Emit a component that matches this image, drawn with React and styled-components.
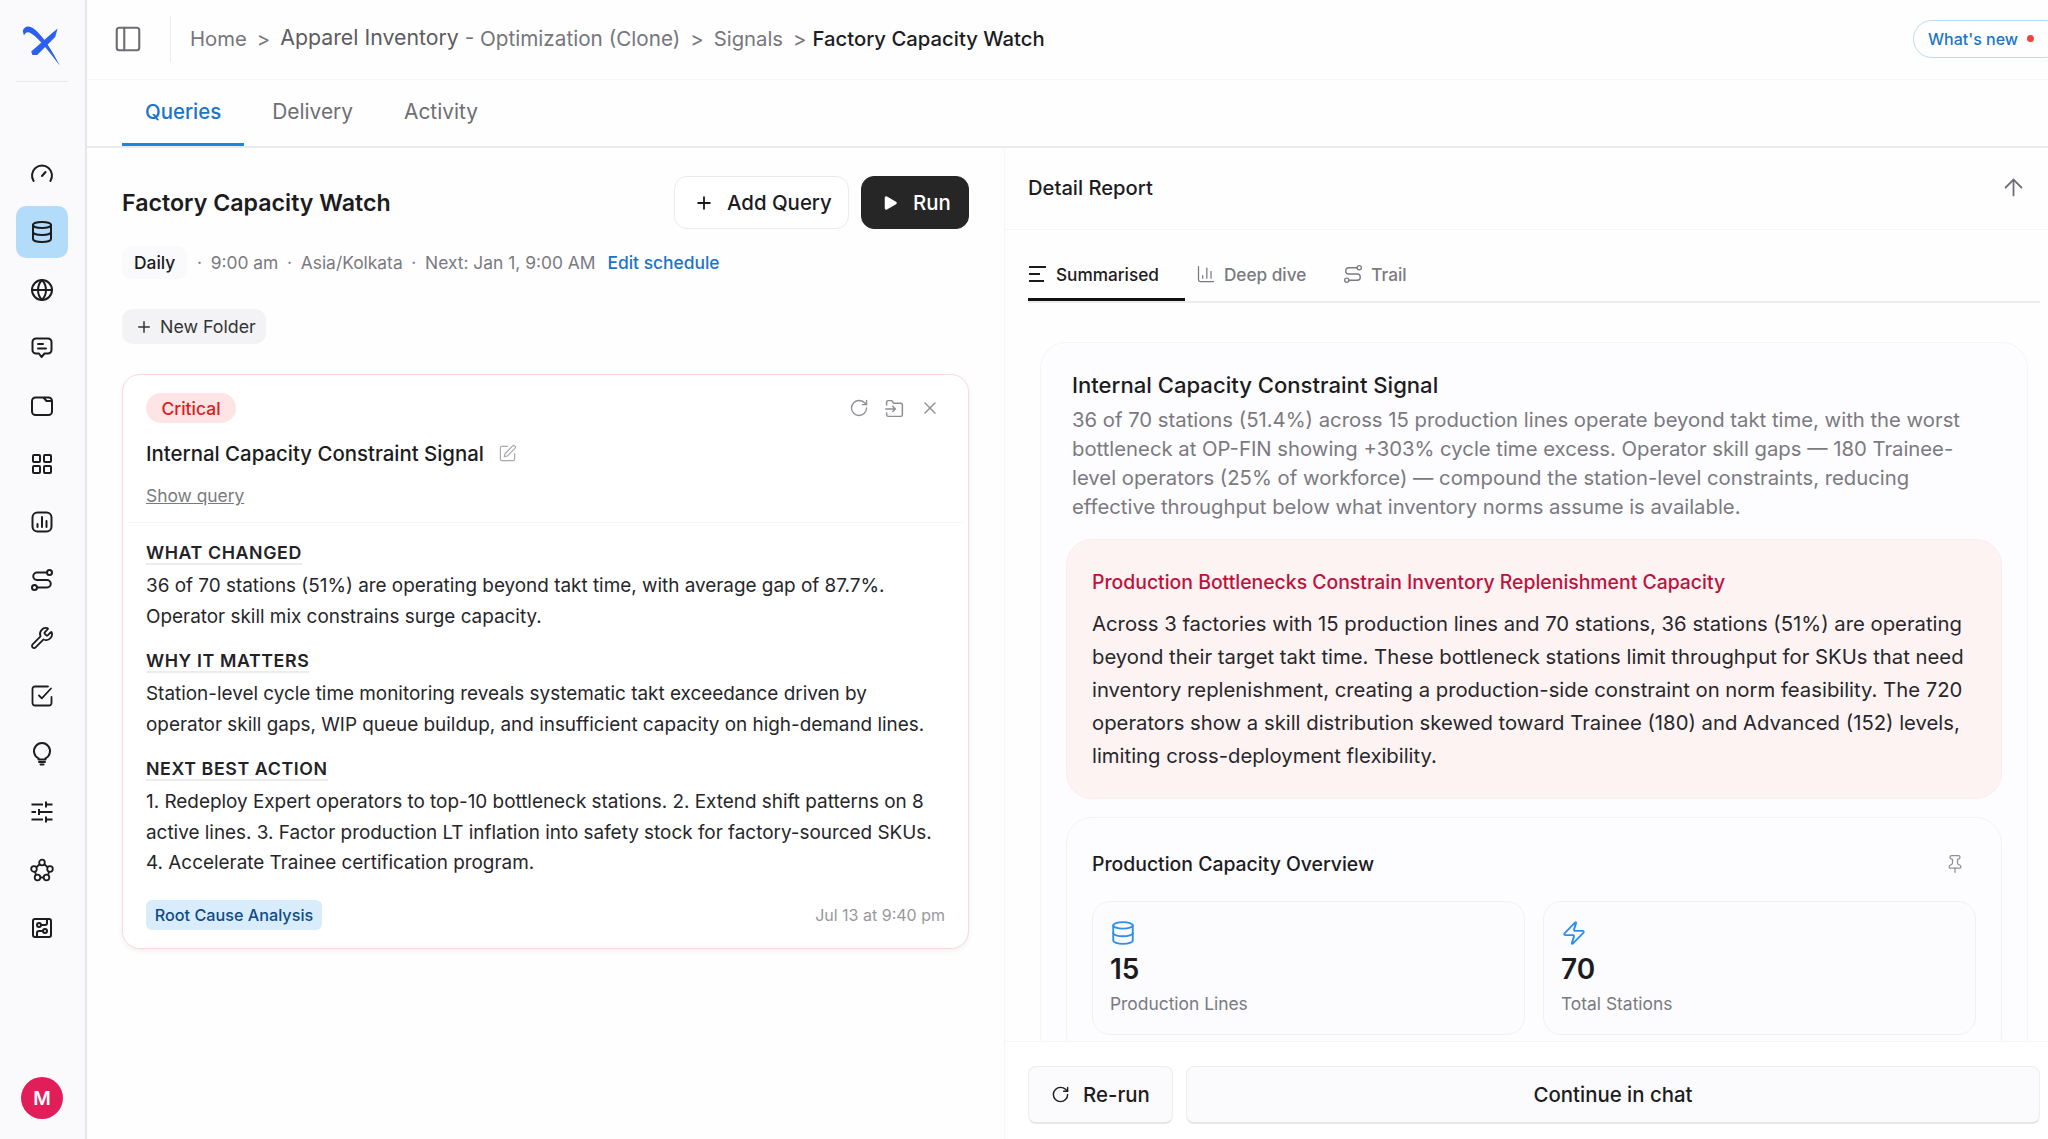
import React from 'react';
import styled, { createGlobalStyle } from 'styled-components';
import {
  ArrowUp, ChartColumn, CircuitBoard, Database, Globe, LayoutGrid,
  PanelLeft, Pin, Play, Plus, RotateCw, SquarePen, Wrench, X, Zap,
} from 'lucide-react';

const GlobalStyle = createGlobalStyle`
  html, body { margin: 0; height: 100%; background: #fefefe; overflow: hidden; }
  body { font-family: Inter, "Liberation Sans", sans-serif; color: #1c1c1e; }
  * { box-sizing: border-box; }
`;

const Shell = styled.div`
  display: flex;
  width: 2048px;
  height: 1139px;
  overflow: hidden;
`;

const Sidebar = styled.aside`
  flex: 0 0 87px;
  display: flex;
  flex-direction: column;
  align-items: center;
  background: #faf9fc;
  border-right: 2px solid #e6e6e8;
  padding: 0 1px 20px 0;
`;

const LogoWrap = styled.div`
  width: 52px;
  height: 82px;
  flex: none;
  display: flex;
  align-items: center;
  justify-content: center;
  padding-top: 4px;
  border-bottom: 1px solid #e9e9ec;
  margin-bottom: 66px;
  svg { flex: none; }
`;

const NavList = styled.nav`
  display: flex;
  flex-direction: column;
  gap: 6px;
`;

const NavItem = styled.div`
  width: 52px;
  height: 52px;
  display: flex;
  align-items: center;
  justify-content: center;
  border-radius: 10px;
  color: #1c1c1e;
  background: ${props => (props.$active ? '#b3dbfa' : 'transparent')};
`;

const Avatar = styled.div`
  margin-top: auto;
  width: 42px;
  height: 42px;
  border-radius: 50%;
  background: #e11d5a;
  color: #fff;
  font-size: 19px;
  font-weight: 600;
  display: flex;
  align-items: center;
  justify-content: center;
`;

const Content = styled.div`
  flex: 1;
  min-width: 0;
  display: flex;
  flex-direction: column;
`;

const TopBar = styled.header`
  flex: 0 0 80px;
  display: flex;
  align-items: center;
  border-bottom: 1px solid #f6f6f7;
  padding: 0 0 2px 26px;
`;

const TopDivider = styled.div`
  width: 1px;
  height: 46px;
  background: #eeeeef;
  margin: 0 19px 0 27px;
`;

const Crumbs = styled.div`
  display: flex;
  align-items: center;
  font-size: 20.3px;
  color: #76767c;
`;

const Crumb = styled.span`
  color: ${props => (props.$current ? '#1c1c1e' : props.$strong ? '#5c5c62' : '#76767c')};
  font-weight: ${props => (props.$current ? 500 : 400)};
  font-size: ${props => props.$size || 'inherit'};
  margin-bottom: ${props => (props.$strong ? '4px' : '0')};
`;

const CrumbSep = styled.span`
  margin: 0 ${props => (props.$tight ? '6px' : '10px')} 0 10px;
`;

const NewsPill = styled.div`
  margin-left: auto;
  margin-right: -16px;
  height: 38px;
  width: 151px;
  flex: none;
  display: flex;
  align-items: center;
  gap: 9px;
  padding-left: 14px;
  border: 1px solid #bcdcf6;
  border-radius: 19px;
  color: #1a75c9;
  font-size: 16px;
  font-weight: 500;
`;

const RedDot = styled.span`
  width: 7px;
  height: 7px;
  border-radius: 50%;
  background: #f43f3f;
`;

const TabBar = styled.div`
  flex: 0 0 66px;
  display: flex;
  gap: 5px;
  padding-left: 35px;
  border-bottom: 2px solid #ebebed;
`;

const Tab = styled.div`
  height: 66px;
  padding: 0 23px;
  display: flex;
  align-items: center;
  font-size: ${props => (props.$active ? '20.4px' : '20.9px')};
  font-weight: ${props => (props.$active ? 500 : 400)};
  color: ${props => (props.$active ? '#1a75c9' : '#6e6e74')};
  border-bottom: 3px solid ${props => (props.$active ? '#1a86e0' : 'transparent')};
`;

const Main = styled.div`
  flex: 1;
  min-height: 0;
  display: flex;
`;

const LeftPane = styled.section`
  flex: 0 0 917px;
  padding: 28px 35px 0;
`;

const TitleRow = styled.div`
  display: flex;
  align-items: center;
`;

const PageTitle = styled.h1`
  margin: 0;
  font-size: 23.2px;
  font-weight: 600;
  flex: 1;
`;

const Button = styled.button`
  height: 53px;
  display: flex;
  align-items: center;
  font-family: inherit;
  font-size: 20.4px;
  font-weight: 500;
  border-radius: 13px;
  border: 1px solid ${props => (props.$dark ? '#262626' : '#ebebed')};
  background: ${props => (props.$dark ? '#262626' : '#fff')};
  color: ${props => (props.$dark ? '#fff' : '#1c1c1e')};
  margin-left: ${props => (props.$dark ? '12px' : '0')};
  width: ${props => props.$width};
  padding: 0 0 0 19px;
  gap: ${props => (props.$dark ? '14px' : '13px')};
`;

const MetaRow = styled.div`
  display: flex;
  align-items: center;
  margin-top: 17px;
  font-size: 17.4px;
  color: #7a7a80;
`;

const Chip = styled.span`
  height: 33px;
  padding: 0 12px;
  border-radius: 9px;
  background: #faf9fb;
  color: #1c1c1e;
  font-weight: 500;
  display: flex;
  align-items: center;
  margin-right: 1px;
`;

const Dot = styled.span`
  margin: 0 8.7px;
`;

const EditLink = styled.a`
  margin-left: 12px;
  color: #1a75c9;
  font-weight: 500;
`;

const FolderButton = styled.button`
  margin-top: 30px;
  height: 35px;
  width: 144px;
  border: none;
  border-radius: 11px;
  background: #f3f3f5;
  color: #333338;
  font-family: inherit;
  font-size: 17.8px;
  display: flex;
  align-items: center;
  gap: 7px;
  padding: 0 0 0 13px;
`;

const SignalCard = styled.article`
  margin-top: 30px;
  height: 575px;
  padding: 18px 23px 0;
  border: 1px solid #fbd9dc;
  border-radius: 18px;
  background: #fff;
  box-shadow: 0 2px 5px rgba(0, 0, 0, 0.06);
`;

const CardTop = styled.div`
  display: flex;
  align-items: center;
  justify-content: space-between;
`;

const CriticalBadge = styled.span`
  height: 30px;
  width: 90px;
  display: flex;
  align-items: center;
  justify-content: center;
  border-radius: 15px;
  background: #fee4e4;
  color: #dc1c1c;
  font-size: 17.5px;
  font-weight: 500;
`;

const CardActions = styled.div`
  display: flex;
  align-items: center;
  gap: 15px;
  color: #8e8e94;
  padding-right: 5px;
`;

const SignalTitle = styled.div`
  display: flex;
  align-items: center;
  gap: 14px;
  margin-top: 15px;
  height: 30px;
  font-size: 20.4px;
  font-weight: 500;
  color: #1c1c1e;
`;

const ShowQuery = styled.a`
  display: block;
  margin-top: 16px;
  font-size: 17.4px;
  line-height: 24px;
  color: #7a7a80;
  text-decoration: underline;
`;

const CardRule = styled.div`
  height: 1px;
  background: #f5f5f6;
  margin: 14px -18px 0;
`;

const SectionList = styled.div`
  display: flex;
  flex-direction: column;
  gap: 17px;
  padding-top: 18px;
`;

const SectionHead = styled.div`
  width: fit-content;
  height: 24px;
  line-height: 24px;
  font-size: 17.8px;
  font-weight: 600;
  letter-spacing: 0.6px;
  border-bottom: 2px solid #ececee;
  color: #232327;
`;

const SectionBody = styled.p`
  margin: 6px 0 0;
  font-size: 18.9px;
  line-height: 30.5px;
  color: #26262a;
`;

const CardFooter = styled.div`
  display: flex;
  align-items: center;
  justify-content: space-between;
  margin-top: 21px;
`;

const RootTag = styled.span`
  height: 30px;
  width: 176px;
  display: flex;
  align-items: center;
  justify-content: center;
  border-radius: 6px;
  background: #d9ecfc;
  color: #0f4c86;
  font-size: 16.2px;
  font-weight: 500;
`;

const Stamp = styled.span`
  font-size: 16px;
  color: #98989e;
`;

const RightPane = styled.section`
  flex: 1;
  min-width: 0;
  display: flex;
  flex-direction: column;
  border-left: 1px solid #f6f6f7;
`;

const ReportHead = styled.div`
  flex: 0 0 82px;
  display: flex;
  align-items: center;
  justify-content: space-between;
  padding: 0 21px 2px 23px;
  border-bottom: 1px solid #f6f6f7;
  font-size: 20.2px;
  font-weight: 500;
  color: #6e6e74;
`;

const ReportTitle = styled.span`
  color: #1c1c1e;
`;

const ReportTabs = styled.div`
  flex: 0 0 71px;
  display: flex;
  margin: 0 8px 0 23px;
  border-bottom: 2px solid #ececee;
`;

const ReportTab = styled.div`
  display: flex;
  align-items: center;
  gap: 8px;
  height: 71px;
  padding: 20px 26px 0 0;
  margin-right: 11px;
  font-size: 17.2px;
  font-weight: 500;
  color: ${props => (props.$active ? '#1c1c1e' : '#7a7a80')};
  border-bottom: 3px solid ${props => (props.$active ? '#111' : 'transparent')};
`;

const ReportBody = styled.div`
  flex: 1;
  min-height: 0;
  overflow: hidden;
  padding: 39px 20px 0 35px;
`;

const ReportCard = styled.div`
  border: 1px solid #f5f4f7;
  border-radius: 26px;
  background: #fdfcfe;
  padding: 27px 25px 30px;
`;

const SummaryTitle = styled.h2`
  margin: 0 0 5px 6px;
  font-size: 22.1px;
  line-height: 30px;
  font-weight: 500;
  color: #1c1c1e;
`;

const SummaryText = styled.p`
  margin: 0 6px 18px;
  font-size: 20.3px;
  line-height: 29px;
  color: #7a7a80;
`;

const AlertBox = styled.div`
  padding: 29px 25px 26px;
  border: 1px solid #fdecec;
  border-radius: 26px;
  background: #fef3f3;
`;

const AlertTitle = styled.h3`
  margin: 0;
  font-size: 19.4px;
  line-height: 26px;
  font-weight: 500;
  color: #be123c;
`;

const AlertText = styled.p`
  margin: 12px 0 0;
  font-size: 20.3px;
  line-height: 33px;
  color: #27272b;
`;

const OverviewCard = styled.div`
  margin-top: 18px;
  padding: 33px 25px 24px;
  border: 1px solid #f3f2f5;
  border-radius: 26px;
`;

const OverviewHead = styled.div`
  display: flex;
  align-items: center;
  justify-content: space-between;
  height: 26px;
  font-size: 19.4px;
  font-weight: 500;
  color: #8e8e94;
  padding-right: 11px;
`;

const OverviewTitle = styled.span`
  color: #1c1c1e;
`;

const StatGrid = styled.div`
  display: grid;
  grid-template-columns: 1fr 1fr;
  gap: 18px;
  margin-top: 24px;
`;

const StatCard = styled.div`
  height: 134px;
  padding: 18px 17px;
  border: 1px solid #f1f0f3;
  border-radius: 18px;
  background: #fcfbfd;
  color: #2b8ff0;
`;

const StatValue = styled.div`
  margin-top: 1px;
  font-size: 28px;
  line-height: 36px;
  font-weight: 600;
  color: #1c1c1e;
`;

const StatLabel = styled.div`
  margin-top: 5px;
  font-size: 17.4px;
  line-height: 24px;
  color: #7a7a80;
`;

const ReportFooter = styled.div`
  flex: 0 0 98px;
  display: flex;
  gap: 13px;
  padding: 24px 8px 15px 23px;
  background: #fff;
  border-top: 1px solid #f6f6f7;
`;

const FooterButton = styled.button`
  flex: ${props => (props.$wide ? 1 : '0 0 145px')};
  display: flex;
  align-items: center;
  justify-content: center;
  gap: 13px;
  font-family: inherit;
  font-size: 20.4px;
  font-weight: 500;
  color: #1c1c1e;
  background: #fbfafc;
  border: 1px solid #eeeef0;
  border-bottom: 2px solid #e6e6e8;
  border-radius: 8px;
`;

const LogoMark = () => (
  <svg width="72" height="72" viewBox="0 0 60 60" fill="#2a5ff0">
    <path d="M14 20C15 16 19 15 23 18C31 24 38 36 45 49C37 39 29 27 21 22C18 20 16 21 15 24Z" />
    <path d="M21 37L38 22L43 18L41 25L26 40L22 40Z" />
  </svg>
);

const GaugeIcon = () => (
  <svg width="24" height="24" viewBox="0 0 24 24" fill="none" stroke="currentColor" strokeWidth="2" strokeLinecap="round">
    <path d="M3.600 19A10 10 0 1 1 20.400 19" />
    <path d="M12 14l3.500-4" />
  </svg>
);

const ChatIcon = () => (
  <svg width="24" height="24" viewBox="0 0 24 24" fill="none" stroke="currentColor" strokeWidth="2" strokeLinecap="round" strokeLinejoin="round">
    <path d="M6 2.500h12a3.500 3.500 0 0 1 3.500 3.500v8a3.500 3.500 0 0 1-3.500 3.500h-3.500l-3 3.500-2.500-3.500H6a3.500 3.500 0 0 1-3.500-3.500V6A3.500 3.500 0 0 1 6 2.500z" />
    <path d="M8 8h5M8 12.500h8" />
  </svg>
);

const FolderIcon = () => (
  <svg width="24" height="24" viewBox="0 0 24 24" fill="none" stroke="currentColor" strokeWidth="2" strokeLinejoin="round">
    <rect x="2" y="3.500" width="20" height="17.500" rx="3.500" />
    <path d="M13.500 3.500l3 3.500H22" />
  </svg>
);

const ReportIcon = () => (
  <svg width="24" height="24" viewBox="0 0 24 24" fill="none" stroke="currentColor" strokeWidth="2" strokeLinecap="round">
    <rect x="2.500" y="2.500" width="19" height="19" rx="5" />
    <path d="M7.500 17v-3M12 17V7M16.500 17v-6" />
  </svg>
);

const RouteIcon = ({ size = 24, stroke = 2 }) => (
  <svg width={size} height={size} viewBox="0 0 24 24" fill="none" stroke="currentColor" strokeWidth={stroke} strokeLinecap="round">
    <circle cx="19.500" cy="4.500" r="2.500" />
    <circle cx="4.500" cy="19.500" r="2.500" />
    <path d="M17 4.500H7a3.700 3.700 0 0 0 0 7.500h10a3.700 3.700 0 0 1 0 7.500H7" />
  </svg>
);

const TaskIcon = () => (
  <svg width="24" height="24" viewBox="0 0 24 24" fill="none" stroke="currentColor" strokeWidth="1.800" strokeLinecap="round" strokeLinejoin="round">
    <path d="M21.500 13v6a2.500 2.500 0 0 1-2.500 2.500H5A2.500 2.500 0 0 1 2.500 19V5A2.500 2.500 0 0 1 5 2.500h13" />
    <path d="M9 11.500l2.800 2.800L21 4.500" />
  </svg>
);

const BulbIcon = () => (
  <svg width="24" height="24" viewBox="0 0 24 24" fill="none" stroke="currentColor" strokeWidth="2" strokeLinecap="round">
    <path d="M8.500 17.500v-1.200A8 8 0 1 1 15.500 16.300v1.200z" strokeLinejoin="round" />
    <path d="M9 20h6M10.500 22.500h3" />
  </svg>
);

const SlidersIcon = () => (
  <svg width="24" height="24" viewBox="0 0 24 24" fill="none" stroke="currentColor" strokeWidth="2">
    <path d="M1.500 4.500H13M16 4.500h6.500M16 1.500v6" />
    <path d="M1.500 12H6M9 12h13.500M9 9v6" />
    <path d="M1.500 19.500H13M16 19.500h6.500M16 16.500v6" />
  </svg>
);

const MoleculeIcon = () => (
  <svg width="24" height="24" viewBox="0 0 24 24" fill="none" stroke="currentColor" strokeWidth="1.800">
    <circle cx="12" cy="4.500" r="2.800" />
    <circle cx="4" cy="11" r="2.800" />
    <circle cx="20" cy="11" r="2.800" />
    <circle cx="7.500" cy="19.500" r="2.800" />
    <circle cx="16.500" cy="19.500" r="2.800" />
    <path d="M9.800 6.300L6.200 9.200M14.200 6.300l3.600 2.900M5 13.700l1 3.300M19 13.700l-1 3.300M10.300 19.500h3.400" />
  </svg>
);

const LinesIcon = () => (
  <svg width="20" height="20" viewBox="0 0 20 20" fill="none" stroke="currentColor" strokeWidth="2">
    <path d="M1 3h17M1 10h11M1 17h15" />
  </svg>
);

const MoveToIcon = () => (
  <svg width="21" height="21" viewBox="0 0 24 24" fill="none" stroke="currentColor" strokeWidth="1.700" strokeLinecap="round" strokeLinejoin="round">
    <path d="M3 8V5a2 2 0 0 1 2-2h4l2 3h8a2 2 0 0 1 2 2v11a2 2 0 0 1-2 2H5a2 2 0 0 1-2-2v-2" />
    <path d="M2 12.500h11M10 9.500l3 3-3 3" />
  </svg>
);

const navIcons = [
  <GaugeIcon />, <Database size={24} strokeWidth={2} />, <Globe size={24} strokeWidth={2} />,
  <ChatIcon />, <FolderIcon />, <LayoutGrid size={24} strokeWidth={2} />,
  <ReportIcon />, <RouteIcon />, <Wrench size={24} strokeWidth={1.8} />, <TaskIcon />,
  <BulbIcon />, <SlidersIcon />, <MoleculeIcon />, <CircuitBoard size={24} strokeWidth={2} />,
];

const sections = [
  {
    head: 'WHAT CHANGED',
    body: '36 of 70 stations (51%) are operating beyond takt time, with average gap of 87.7%. Operator skill mix constrains surge capacity.',
  },
  {
    head: 'WHY IT MATTERS',
    body: 'Station-level cycle time monitoring reveals systematic takt exceedance driven by operator skill gaps, WIP queue buildup, and insufficient capacity on high-demand lines.',
  },
  {
    head: 'NEXT BEST ACTION',
    body: '1. Redeploy Expert operators to top-10 bottleneck stations. 2. Extend shift patterns on 8 active lines. 3. Factor production LT inflation into safety stock for factory-sourced SKUs. 4. Accelerate Trainee certification program.',
  },
];

export default function App() {
  return (
    <Shell>
      <GlobalStyle />
      <Sidebar>
        <LogoWrap><LogoMark /></LogoWrap>
        <NavList>
          {navIcons.map((icon, i) => (
            <NavItem key={i} $active={i === 1}>{icon}</NavItem>
          ))}
        </NavList>
        <Avatar>M</Avatar>
      </Sidebar>

      <Content>
        <TopBar>
          <PanelLeft size={30} strokeWidth={1.7} color="#6e6e74" />
          <TopDivider />
          <Crumbs>
            <Crumb>Home</Crumb>
            <CrumbSep>&gt;</CrumbSep>
            <Crumb $strong $size="21.3px">Apparel Inventory</Crumb>
            <Crumb $size="20.7px">&nbsp;- Optimization (Clone)</Crumb>
            <CrumbSep>&gt;</CrumbSep>
            <Crumb>Signals</Crumb>
            <CrumbSep $tight>&gt;</CrumbSep>
            <Crumb $current>Factory Capacity Watch</Crumb>
          </Crumbs>
          <NewsPill>What's new<RedDot /></NewsPill>
        </TopBar>

        <TabBar>
          <Tab $active>Queries</Tab>
          <Tab>Delivery</Tab>
          <Tab>Activity</Tab>
        </TabBar>

        <Main>
          <LeftPane>
            <TitleRow>
              <PageTitle>Factory Capacity Watch</PageTitle>
              <Button $width="175px"><Plus size={20} strokeWidth={2.2} />Add Query</Button>
              <Button $dark $width="108px"><Play size={18} fill="#fff" strokeWidth={0} />Run</Button>
            </TitleRow>

            <MetaRow>
              <Chip>Daily</Chip>
              <Dot>·</Dot>
              <span>9:00 am</span>
              <Dot>·</Dot>
              <span>Asia/Kolkata</span>
              <Dot>·</Dot>
              <span>Next: Jan 1, 9:00 AM</span>
              <EditLink>Edit schedule</EditLink>
            </MetaRow>

            <FolderButton><Plus size={18} strokeWidth={2} />New Folder</FolderButton>

            <SignalCard>
              <CardTop>
                <CriticalBadge>Critical</CriticalBadge>
                <CardActions>
                  <RotateCw size={20} strokeWidth={1.6} />
                  <MoveToIcon />
                  <X size={20} strokeWidth={1.6} />
                </CardActions>
              </CardTop>
              <SignalTitle>
                Internal Capacity Constraint Signal
                <SquarePen size={19} strokeWidth={1.5} color="#a8a8ae" />
              </SignalTitle>
              <ShowQuery>Show query</ShowQuery>
              <CardRule />
              <SectionList>
                {sections.map(section => (
                  <div key={section.head}>
                    <SectionHead>{section.head}</SectionHead>
                    <SectionBody>{section.body}</SectionBody>
                  </div>
                ))}
              </SectionList>
              <CardFooter>
                <RootTag>Root Cause Analysis</RootTag>
                <Stamp>Jul 13 at 9:40 pm</Stamp>
              </CardFooter>
            </SignalCard>
          </LeftPane>

          <RightPane>
            <ReportHead>
              <ReportTitle>Detail Report</ReportTitle>
              <ArrowUp size={27} strokeWidth={1.6} />
            </ReportHead>

            <ReportTabs>
              <ReportTab $active><LinesIcon />Summarised</ReportTab>
              <ReportTab><ChartColumn size={20} strokeWidth={1.5} />Deep dive</ReportTab>
              <ReportTab><RouteIcon size={20} stroke={1.6} />Trail</ReportTab>
            </ReportTabs>

            <ReportBody>
              <ReportCard>
                <SummaryTitle>Internal Capacity Constraint Signal</SummaryTitle>
                <SummaryText>
                  36 of 70 stations (51.4%) across 15 production lines operate beyond takt time, with the worst bottleneck at OP-FIN showing +303% cycle time excess. Operator skill gaps — 180 Trainee-level operators (25% of workforce) — compound the station-level constraints, reducing effective throughput below what inventory norms assume is available.
                </SummaryText>
                <AlertBox>
                  <AlertTitle>Production Bottlenecks Constrain Inventory Replenishment Capacity</AlertTitle>
                  <AlertText>
                    Across 3 factories with 15 production lines and 70 stations, 36 stations (51%) are operating beyond their target takt time. These bottleneck stations limit throughput for SKUs that need inventory replenishment, creating a production-side constraint on norm feasibility. The 720 operators show a skill distribution skewed toward Trainee (180) and Advanced (152) levels, limiting cross-deployment flexibility.
                  </AlertText>
                </AlertBox>
                <OverviewCard>
                  <OverviewHead>
                    <OverviewTitle>Production Capacity Overview</OverviewTitle>
                    <Pin size={20} strokeWidth={1.5} />
                  </OverviewHead>
                  <StatGrid>
                    <StatCard>
                      <Database size={26} strokeWidth={1.7} />
                      <StatValue>15</StatValue>
                      <StatLabel>Production Lines</StatLabel>
                    </StatCard>
                    <StatCard>
                      <Zap size={26} strokeWidth={1.7} />
                      <StatValue>70</StatValue>
                      <StatLabel>Total Stations</StatLabel>
                    </StatCard>
                  </StatGrid>
                </OverviewCard>
              </ReportCard>
            </ReportBody>

            <ReportFooter>
              <FooterButton><RotateCw size={19} strokeWidth={1.8} />Re-run</FooterButton>
              <FooterButton $wide>Continue in chat</FooterButton>
            </ReportFooter>
          </RightPane>
        </Main>
      </Content>
    </Shell>
  );
}
